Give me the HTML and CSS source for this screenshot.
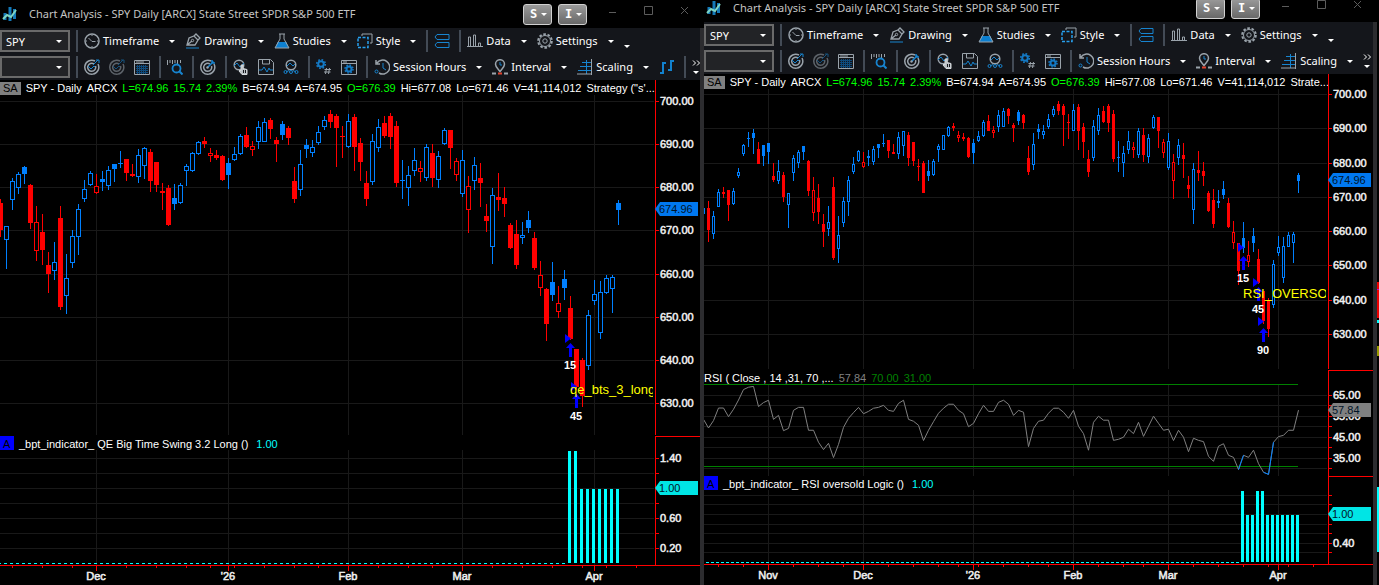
FILE: index.html
```html
<!DOCTYPE html>
<html lang="en">
<head>
  <meta charset="UTF-8">
  <meta name="viewport" content="width=device-width, initial-scale=1.0">
  <title>Chart Analysis</title>
  <link rel="stylesheet" href="styles.css">
</head>
<body>

  <!-- icon set -->
  <svg class="icon-defs" aria-hidden="true">
    <symbol id="i-logo" viewBox="0 0 16 16"><path d="M3 7v7M8 1v14M12.500 3v10" stroke="#1479b8" stroke-width="3" fill="none"/><path d="M1 13l4-4 4 2 5-7" stroke="#7fd6c4" stroke-width="2" fill="none"/></symbol>
    <symbol id="i-clock" viewBox="0 0 16 16"><circle cx="8" cy="8" r="7" class="g" stroke-width="1.500"/><path d="M4.500 5L8 8.500h3.500M8 2v1M8 13v1M2 8h1M13 8h1" class="g"/></symbol>
    <symbol id="i-pen" viewBox="0 0 16 16"><path d="M2 12l2-7 5-2 4 4-3 5zM2 12l5-4M9 3l2-2 4 4-2 2" class="g" stroke-width="1.300"/><circle cx="7.500" cy="7.500" r="1.200" class="g"/><path d="M1 15h13" class="b"/></symbol>
    <symbol id="i-flask" viewBox="0 0 16 16"><path d="M3.500 9h9l2.500 6H1z" fill="#0c7fd0"/><path d="M5 1h6M6 1v5L1 15h14L10 6V1" class="g"/></symbol>
    <symbol id="i-style" viewBox="0 0 16 16"><path d="M5 3V1h10v9h-2" class="g"/><path d="M1 4.500h10v10H1z" fill="none" stroke="#27a0ee" stroke-dasharray="3 1.500" stroke-width="1.500"/></symbol>
    <symbol id="i-stack" viewBox="0 0 16 16"><path d="M3 1.500h12v5H3L1 4zM3 9.500h12v5H3L1 12z" class="b"/></symbol>
    <symbol id="i-data" viewBox="0 0 16 16"><path d="M0 13.500h16M1.500 13V4h2v9M6.500 13V2h2v11M11.500 13v-3h2v3" class="g"/></symbol>
    <symbol id="i-gear" viewBox="0 0 16 16"><circle cx="8" cy="8" r="6.800" class="g" stroke-width="2" stroke-dasharray="2.600 1.700"/><circle cx="8" cy="8" r="5.500" class="g"/><circle cx="8" cy="8" r="2.200" class="g"/></symbol>
    <symbol id="i-scan" viewBox="0 0 16 16"><path d="M11 2a7 7 0 1 0 3 3M10 5a4 4 0 1 0 1.500 2" class="g" stroke-width="1.500"/><path d="M4 7l3 3 3-3 1 1M9 6l5-5M12 1h3v3" class="b"/></symbol>
    <symbol id="i-table" viewBox="0 0 16 16"><path d="M.5 1.500h15v14H.5zM1 4.500h14" class="g"/><path d="M2 3h8" class="g"/><path d="M3.500 6v9M5.500 6v9M7.500 6v9M9.500 6v9M11.500 6v9M2 7.500h12M2 9.500h12M2 11.500h12M2 13.500h12" stroke="#0e4b7d" fill="none"/></symbol>
    <symbol id="i-find" viewBox="0 0 16 16"><path d="M.5 1v5M3 1v3M5.500 1v4M8 1v3M10.500 1v4M13.500 1v3" class="g"/><circle cx="9.500" cy="9.500" r="4" class="b" stroke-width="1.800"/><path d="M12 12l3.500 3.500" class="b" stroke-width="2"/></symbol>
    <symbol id="i-target" viewBox="0 0 16 16"><path d="M11 2a7 7 0 1 0 3 3M10 5a4 4 0 1 0 1.500 2" class="g" stroke-width="1.500"/><path d="M7.500 8.500l6-6M12 1v3h3" class="b" stroke-width="1.500"/><circle cx="7.500" cy="8.500" r="1.200" fill="#9aa3ab"/></symbol>
    <symbol id="i-touch" viewBox="0 0 16 16"><circle cx="6" cy="6" r="4.800" class="g" stroke-width="1.500"/><path d="M1 7l3-3 3 4 4-4" class="b"/><path d="M8 6v6l-1-1-1 1 3 3.500h5v-5l-4-1V6z" fill="#b9bfc4" stroke="#d5d9dc"/><path d="M10.500 11v3M12.500 11v3" stroke="#14161b"/></symbol>
    <symbol id="i-save" viewBox="0 0 16 16"><path d="M.5 .5h12l3 3v12H.5zM4.500 1v4h7V1" class="g"/><path d="M1 11h3l2-3 3 5 2-4 1 2h3" class="b"/></symbol>
    <symbol id="i-nodes" viewBox="0 0 16 16"><circle cx="8" cy="6" r="4.800" class="g" stroke-width="1.500"/><path d="M4 7l3-3 3 3 2-2M3 13l3-1.500M10 11.500l3 1.500" class="b"/><circle cx="2.500" cy="13" r="1.500" class="b"/><circle cx="13.500" cy="13" r="1.500" class="b"/><circle cx="8" cy="13" r="1.500" class="b"/></symbol>
    <symbol id="i-gearnum" viewBox="0 0 16 16"><circle cx="5" cy="5" r="2.800" fill="none" stroke="#1479c4" stroke-width="2"/><circle cx="5" cy="5" r="4.300" fill="none" stroke="#1479c4" stroke-width="1.600" stroke-dasharray="1.700 1.670"/><path d="M10.500 9l-1 6M13.500 9l-1 6M8.500 10.500h6.500M8 13h6.500" class="g"/></symbol>
    <symbol id="i-wingear" viewBox="0 0 16 16"><path d="M.5 1.500h15v14H.5zM1 4.500h14M2 3h4" class="g"/><circle cx="8" cy="10" r="2.500" fill="none" stroke="#1479c4" stroke-width="2"/><circle cx="8" cy="10" r="4" fill="none" stroke="#1479c4" stroke-width="1.500" stroke-dasharray="1.600 1.540"/></symbol>
    <symbol id="i-history" viewBox="0 0 16 16"><path d="M3 4a7 7 0 1 1 2 10M2 1v4h4" class="g" stroke-width="1.500"/><path d="M9 4v5l3 2" class="b"/><circle cx="2.500" cy="12.500" r="1.500" class="b"/></symbol>
    <symbol id="i-pin" viewBox="0 0 16 16"><path d="M8 12.500C6 9.500 3.500 8 3.500 5.200a4.500 4.500 0 0 1 9 0C12.500 8 10 9.500 8 12.500z" class="g" stroke-width="1.500"/><path d="M8 3v3h2" class="b"/><path d="M0 14.500h4M12 14.500h4" class="g" stroke-width="2"/><path d="M6 14.500h4" stroke="#e0412c" stroke-width="2"/></symbol>
    <symbol id="i-scale" viewBox="0 0 16 16"><path d="M5 3.500h9M3 7.500h11M1 11.500h13M9.500 1v14" class="b"/><path d="M14.500 0v16M0 15h14" class="g"/></symbol>
    <symbol id="i-ohlc" viewBox="0 0 16 16"><path d="M1 14h2.500M4 3v12M4 4h3M9 11h3M12 1v11M12 2h3" fill="none" stroke="#1282cf" stroke-width="2"/></symbol>
  </svg>

  <!-- title bar and toolbars, same in every chart window -->
  <template id="chrome">
    <header class="titlebar">
      <svg class="icon"><use href="#i-logo"/></svg>
      <h1>Chart Analysis - SPY Daily [ARCX] State Street SPDR S&amp;P 500 ETF</h1>
      <button class="link-button" aria-label="Symbol link"><b>S</b><i class="arrow"></i></button>
      <button class="link-button" aria-label="Interval link"><b>I</b><i class="arrow"></i></button>
      <div class="window-buttons">
        <button aria-label="Minimize"><svg viewBox="0 0 9 9"><path d="M1 6.500h7"/></svg></button>
        <button aria-label="Maximize"><svg viewBox="0 0 9 9"><path d="M.5.5h8v8h-8z"/></svg></button>
        <button aria-label="Close"><svg viewBox="0 0 9 9"><path d="M1 1l7 7M8 1L1 8"/></svg></button>
      </div>
    </header>
    <nav class="toolbars">
      <div class="toolbar">
        <label class="combo"><select aria-label="Symbol"><option>SPY</option></select><i class="arrow"></i></label>
        <span class="sep"></span>
        <button class="menu"><svg class="icon"><use href="#i-clock"/></svg><span>Timeframe</span><i class="arrow"></i></button>
        <button class="menu"><svg class="icon"><use href="#i-pen"/></svg><span>Drawing</span><i class="arrow"></i></button>
        <button class="menu"><svg class="icon"><use href="#i-flask"/></svg><span>Studies</span><i class="arrow"></i></button>
        <button class="menu"><svg class="icon"><use href="#i-style"/></svg><span>Style</span><i class="arrow"></i></button>
        <span class="sep"></span>
        <button class="tool" aria-label="Panels"><svg class="icon"><use href="#i-stack"/></svg></button>
        <span class="sep"></span>
        <button class="menu"><svg class="icon"><use href="#i-data"/></svg><span>Data</span><i class="arrow"></i></button>
        <button class="menu"><svg class="icon"><use href="#i-gear"/></svg><span>Settings</span><i class="arrow"></i></button>
        <button class="more" aria-label="More"><i class="arrow"></i></button>
      </div>
      <div class="toolbar">
        <label class="combo"><select aria-label="Template"><option></option></select><i class="arrow"></i></label>
        <span class="sep"></span>
        <button class="tool" aria-label="Scan"><svg class="icon"><use href="#i-scan"/></svg></button>
        <button class="tool" aria-label="Rescan" disabled><svg class="icon"><use href="#i-scan"/></svg></button>
        <button class="tool" aria-label="Table"><svg class="icon"><use href="#i-table"/></svg></button>
        <span class="sep"></span>
        <button class="tool" aria-label="Find bar"><svg class="icon"><use href="#i-find"/></svg></button>
        <span class="sep"></span>
        <button class="tool" aria-label="Target"><svg class="icon"><use href="#i-target"/></svg></button>
        <span class="sep"></span>
        <button class="tool" aria-label="Select study"><svg class="icon"><use href="#i-touch"/></svg></button>
        <button class="tool" aria-label="Save study"><svg class="icon"><use href="#i-save"/></svg></button>
        <button class="tool" aria-label="Study nodes"><svg class="icon"><use href="#i-nodes"/></svg></button>
        <span class="sep"></span>
        <button class="tool" aria-label="Parameters"><svg class="icon"><use href="#i-gearnum"/></svg></button>
        <button class="tool" aria-label="Window settings"><svg class="icon"><use href="#i-wingear"/></svg></button>
        <span class="sep"></span>
        <button class="menu"><svg class="icon"><use href="#i-history"/></svg><span>Session Hours</span><i class="arrow"></i></button>
        <button class="menu"><svg class="icon"><use href="#i-pin"/></svg><span>Interval</span><i class="arrow"></i></button>
        <button class="menu"><svg class="icon"><use href="#i-scale"/></svg><span>Scaling</span><i class="arrow"></i></button>
        <button class="tool extra" aria-label="Bar type"><svg class="icon"><use href="#i-ohlc"/></svg></button>
        <span class="sep extra"></span>
        <button class="overflow" aria-label="More tools"><svg viewBox="0 0 9 6"><path d="M1 .5L3.500 3 1 5.500M5 .5L7.500 3 5 5.500"/></svg><i class="arrow"></i></button>
      </div>
    </nav>
  </template>

  <div class="desktop">
    <section class="window" id="swing">
      <div class="chrome"></div>
      <div class="legend quote">
        <p>
          <span class="badge">SA</span><span>SPY - Daily</span><span>ARCX</span>
          <span class="up">L=674.96</span><span class="up">15.74</span><span class="up">2.39%</span>
          <span>B=674.94</span><span>A=674.95</span><span class="up">O=676.39</span>
          <span>Hi=677.08</span><span>Lo=671.46</span><span>V=41,114,012</span><span>Strategy ("s'...</span>
        </p>
        <div class="axis-cap"></div>
      </div>
      <svg class="pane price"></svg>
      <div class="legend">
        <p><span class="badge study">A</span><span>_bpt_indicator_ QE Big Time Swing 3.2 Long ()</span><span class="cyan">1.00</span></p>
        <div class="axis-cap split"></div>
      </div>
      <svg class="pane signal"></svg>
    </section>

    <section class="window narrow" id="oversold">
      <div class="chrome"></div>
      <div class="legend quote">
        <p>
          <span class="badge">SA</span><span>SPY - Daily</span><span>ARCX</span>
          <span class="up">L=674.96</span><span class="up">15.74</span><span class="up">2.39%</span>
          <span>B=674.94</span><span>A=674.95</span><span class="up">O=676.39</span>
          <span>Hi=677.08</span><span>Lo=671.46</span><span>V=41,114,012</span><span>Strate...</span>
        </p>
        <div class="axis-cap"></div>
      </div>
      <svg class="pane price"></svg>
      <div class="legend">
        <p><span>RSI ( Close , 14 ,31, 70 ,...</span><span class="gray">57.84</span><span class="green">70.00</span><span class="green">31.00</span></p>
        <div class="axis-cap split"></div>
      </div>
      <svg class="pane rsi"></svg>
      <div class="legend">
        <p><span class="badge study">A</span><span>_bpt_indicator_ RSI oversold Logic ()</span><span class="cyan">1.00</span></p>
        <div class="axis-cap split"></div>
      </div>
      <svg class="pane signal"></svg>
    </section>

    <!-- next window, only its edge is on screen -->
    <div class="next-window"></div>
  </div>

  <script src="charts.js"></script>
</body>
</html>
```

FILE: styles.css
```css
* {
  box-sizing: border-box;
}

body {
  margin: 0;
  background: #000;
  color: #fff;
  font-family: "Liberation Sans", Arial, sans-serif;
  font-size: 11px;
  overflow: hidden;
}

button,
select {
  font: inherit;
  color: inherit;
  background: none;
  border: 0;
  padding: 0;
  margin: 0;
}

.icon-defs {
  display: none;
}

.icon {
  width: 16px;
  height: 16px;
  flex: none;
}

.g {
  fill: none;
  stroke: #9aa3ab;
}

.b {
  fill: none;
  stroke: #1784cf;
}

.arrow {
  width: 0;
  height: 0;
  flex: none;
  border: 3px solid transparent;
  border-top: 3px solid #fff;
  border-bottom: 0;
}

.desktop {
  display: flex;
  height: 100vh;
  overflow: hidden;
}

.window {
  flex: 704 1 0;
  min-width: 0;
  display: flex;
  flex-direction: column;
}

.window.narrow {
  flex-grow: 673;
  margin-top: -6px;
}

/* title bar */
.titlebar {
  display: flex;
  align-items: center;
  height: 28px;
  padding: 0 15px 0 2px;
  font-family: "Noto Sans", "Open Sans", sans-serif;
}

.titlebar h1 {
  flex: 1;
  min-width: 0;
  margin: 0 0 2px 11px;
  font-size: 11px;
  font-weight: normal;
  color: #c4c4c4;
  white-space: nowrap;
  overflow: hidden;
}

.link-button {
  display: flex;
  align-items: center;
  justify-content: space-between;
  width: 29px;
  height: 21px;
  margin-right: 6px;
  padding: 0 4px 0 6px;
  border: 1px solid #d0d0d0;
  border-radius: 3px;
  background: linear-gradient(#9a9a9a, #686868);
  font-family: "DejaVu Sans Mono", monospace;
  font-size: 12px;
}

.window-buttons {
  display: flex;
  gap: 27px;
  margin: 0 0 8px 15px;
}

.window-buttons svg {
  display: block;
  width: 9px;
  height: 9px;
  fill: none;
  stroke: #5c5c5c;
}

/* toolbars */
.toolbars {
  margin-right: 4px;
  background: #14161b;
  box-shadow: 4px 0 0 #2c2c2f;
  font-family: "Noto Sans", "Open Sans", sans-serif;
}

.toolbar {
  display: flex;
  align-items: center;
  height: 26px;
  overflow: hidden;
}

.combo {
  position: relative;
  flex: none;
  width: 70px;
  height: 22px;
  border: 2px solid #6a6a6a;
  background: #222326;
}

.combo select {
  appearance: none;
  width: 100%;
  height: 100%;
  padding-left: 4px;
}

.combo .arrow {
  position: absolute;
  right: 6px;
  top: 8px;
  pointer-events: none;
}

.sep {
  flex: none;
  width: 2px;
  height: 22px;
  margin: 0 6px;
  background: #434b56;
}

.tool {
  display: flex;
  flex: none;
  margin-right: 9px;
}

.tool + .sep {
  margin-left: 0;
}

.tool:disabled {
  opacity: .55;
}

.menu {
  display: flex;
  flex: none;
  align-items: center;
  margin-right: 10px;
}

.menu span {
  margin: 0 10px 2px 3px;
}

.menu + .sep {
  margin-left: 0;
}

.more {
  display: flex;
  margin-top: 10px;
}

.overflow {
  display: flex;
  flex: none;
  flex-direction: column;
  align-items: center;
  gap: 5px;
}

.overflow svg {
  width: 9px;
  height: 6px;
  fill: none;
  stroke: #fff;
}

.narrow .extra {
  display: none;
}

/* legends over each pane */
.legend,
.pane {
  border-right: 4px solid #2c2c2f;
}

.legend {
  display: flex;
  flex: none;
  height: 14px;
}

.legend.quote {
  height: 15px;
}

.legend p {
  display: flex;
  flex: 1;
  min-width: 0;
  gap: 5px;
  margin: 0;
  line-height: 16px;
  white-space: nowrap;
  overflow: hidden;
}

.legend.quote p {
  padding-top: 2px;
  line-height: 13px;
}

.axis-cap {
  flex: none;
  width: 45px;
  border-left: 1px solid #f00;
}

.axis-cap.split {
  border-top: 1px solid #f00;
}

.badge {
  padding: 0 3px;
  background: #808080;
  color: #000;
}

.badge.study {
  width: 14px;
  background: #00f;
}

.up { color: #0f0; }
.cyan { color: #0ff; margin-left: 3px; }
.gray { color: #808080; }
.green { color: #008000; }

/* chart panes */
.pane {
  display: block;
  flex: none;
  width: 100%;
}

#swing .price { height: 341px; }
#swing .signal { height: 135px; }
#oversold .price { height: 281px; }
#oversold .rsi { height: 92px; }
#oversold .signal { height: 95px; }

.pane text {
  fill: #fff;
  font-size: 11px;
}

.pane .scale {
  fill: #f0f0f0;
  stroke: #f0f0f0;
  stroke-width: .5;
}

.pane .mark { font-weight: bold; }
.pane .name { fill: #ff0; font-size: 13px; }
.pane .tag { fill: #001428; }

.next-window {
  flex: 2 1 0;
  background: linear-gradient(#000 282px, #e00 282px, #e00 289px, #c0c 289px, #c0c 290px, #e00 290px, #e00 318px, #000 318px, #000 320px, #0ff 320px, #0ff 323px, #000 323px, #000 346px, #990 346px, #990 356px, #000 356px, #000 487px, #0ff 487px, #0ff 552px, #000 552px);
}
```

FILE: charts.js
```javascript
// both windows share the chrome
document.querySelectorAll('.chrome').forEach(el => {
  el.appendChild(document.getElementById('chrome').content.cloneNode(true));
});

// [high, body top, body bottom, low, type], distances under the 700 line
// u/U = up hollow/filled, d/D = down hollow/filled
const bars = [
  [144,144,152,152,'U'],[135,144,172,187,'D'],[148,154,177,183,'u'],[120,124,143,143,'u'],
  [118,124,127,132,'D'],[122,122,141,161,'D'],[119,123,139,141,'u'],[94,99,104,107,'u'],
  [64,65,76,79,'u'],[49,56,58,68,'U'],[45,50,56,76,'U'],[61,70,89,89,'D'],
  [65,65,79,91,'U'],[63,63,74,89,'U'],[88,104,109,112,'D'],[84,98,110,114,'u'],
  [99,103,130,137,'D'],[126,126,140,169,'u'],[78,81,100,110,'u'],[72,74,88,94,'u'],
  [66,67,74,84,'U'],[84,85,123,129,'D'],[106,122,151,161,'d'],[114,132,150,165,'D'],
  [152,165,174,193,'D'],[142,162,171,180,'u'],[106,118,207,210,'D'],[154,178,196,214,'u'],
  [130,136,163,168,'u'],[104,109,137,155,'u'],[80,89,99,102,'u'],[71,73,85,86,'u'],
  [74,86,93,94,'d'],[71,79,82,91,'U'],[66,70,86,90,'u'],[64,64,69,82,'U'],
  [51,63,64,68,'U'],[59,59,73,81,'D'],[64,74,76,77,'D'],[49,55,77,83,'u'],
  [47,48,66,79,'u'],[49,52,81,92,'D'],[62,62,85,92,'D'],[83,91,93,110,'D'],
  [85,88,125,126,'D'],[84,98,104,110,'U'],[83,85,103,104,'u'],[64,66,71,86,'u'],
  [52,53,71,72,'u'],[41,42,54,55,'u'],[37,41,44,48,'D'],[48,53,56,62,'d'],
  [50,55,58,60,'D'],[55,56,80,81,'D'],[58,63,75,89,'U'],[47,54,60,61,'u'],
  [34,36,54,55,'u'],[27,35,47,48,'D'],[41,46,50,56,'d'],[21,27,42,49,'u'],
  [18,22,42,42,'u'],[18,20,29,39,'D'],[37,40,44,62,'D'],[21,24,35,40,'U'],
  [26,28,38,45,'D'],[67,81,99,103,'D'],[50,64,90,96,'u'],[39,45,49,58,'U'],
  [40,47,53,57,'u'],[26,32,43,45,'u'],[16,20,27,30,'u'],[10,14,22,28,'D'],
  [14,16,28,67,'D'],[26,36,37,58,'D'],[14,21,47,48,'u'],[14,17,47,71,'D'],
  [38,43,62,81,'D'],[71,83,99,106,'D'],[34,41,82,85,'u'],[19,27,48,52,'u'],
  [16,23,36,38,'D'],[13,16,37,49,'D'],[21,26,83,87,'D'],[60,80,81,99,'U'],
  [66,75,88,106,'u'],[48,60,71,76,'u'],[61,68,72,82,'d'],[44,47,78,81,'u'],
  [44,53,78,87,'D'],[51,56,80,88,'u'],[28,30,44,45,'u'],[30,30,48,69,'D'],
  [58,61,75,81,'d'],[50,60,94,97,'u'],[76,86,110,133,'d'],[57,65,81,90,'u'],
  [63,78,83,107,'D'],[104,116,121,132,'D'],[88,95,147,164,'u'],[73,97,100,111,'D'],
  [87,98,104,117,'D'],[123,125,148,149,'D'],[120,134,165,169,'D'],[122,135,138,144,'u'],
  [111,120,128,133,'U'],[132,138,168,170,'D'],[161,175,188,196,'d'],[188,189,224,241,'D'],
  [162,182,195,201,'U'],[186,203,212,218,'d'],[170,179,188,200,'U'],[196,208,239,240,'D'],
  [249,249,287,290,'D'],[258,260,296,307,'D'],[210,215,266,270,'u'],[180,194,201,205,'u'],
  [181,192,233,239,'u'],[175,178,193,194,'u'],[175,177,189,213,'u'],[100,103,110,125,'U']
];

const rsi = [
  53.4,49.3,52.8,58.8,58.8,54.7,58.2,62.6,67.6,68.7,69.1,59.5,61.4,62.5,53.4,55.3,
  48,49.1,57.7,59.1,59.1,48.2,48.2,42.5,39,42,35.2,41.5,49.6,53.9,56.6,59.1,56.1,
  57.2,58.7,59.1,60.1,57.7,57.2,61,62.5,53.4,52.5,50.6,43.3,48.2,52.3,56.3,58.7,
  60.6,60.6,57.7,56.1,49.9,51.5,56.1,60.1,57.2,57.2,61.5,62.5,60.6,55.3,57.7,56.8,
  40.4,49.1,52.5,53,56.3,58.7,58.7,56.8,53.9,57.7,50.1,46.6,38.7,52,54.9,53,53,
  43.4,43.9,44.9,48.7,46.6,52,45.3,50.1,54.9,51.5,48.2,48.7,43.3,48.2,44.9,38,
  44.4,43.4,42.8,35.8,33.4,40.6,41.8,36.3,35.3,29.5,36.3,35.3,38.7,32.3,28.2,27.2,
  42.5,45.2,45.8,48.2,48.2,57.8
];

// bars back from the last one
const months = [[106, 'Nov'], [87, 'Dec'], [65, "'26"], [45, 'Feb'], [26, 'Mar'], [4, 'Apr']];
const weeks = [116, 111, 101, 96, 91, 82, 77, 72, 68, 64, 59, 54, 50, 40, 35, 31, 21, 16, 11, 6, 2, -3];

const AXIS = 45;
const GRID = '#191919';
const last = bars.length - 1;

function rect(x, y, w, h, fill) {
  return `<rect x="${x}" y="${y}" width="${w}" height="${h}" fill="${fill}"/>`;
}

function label(x, y, text, cls, anchor) {
  return `<text x="${x}" y="${y}" class="${cls}" text-anchor="${anchor || 'start'}">${text}</text>`;
}

function tag(x, y, text, fill) {
  return `<path d="M${x} ${y}l5 -7h38v14h-38z" fill="${fill}"/>` + label(x + 4, y + 4, text, 'tag');
}

// svg width without the window border, on whole pixels
function paneWidth(svg) {
  return Math.round(svg.getBoundingClientRect().width) - 4;
}

function frame(c, w, h, rows) {
  const ax = w - AXIS;
  let s = '';
  months.forEach(m => { s += rect(ax - c.right - m[0] * c.step, 0, 1, h, GRID); });
  rows.forEach(r => {
    s += rect(0, r[0], ax - 1, 1, GRID) + rect(ax, r[0], 4, 1, '#f00');
    if (r[1]) s += label(ax + 5, r[0] + 4, r[1], 'scale');
  });
  return s + rect(ax, 0, 1, h, '#f00');
}

function drawPrice(svg, c) {
  const w = paneWidth(svg), ax = w - AXIS;
  const y = v => Math.round(c.zero + (v - 1) * c.zoom);
  const rows = [];
  for (let p = 0; p < 8; p++) {
    rows.push([Math.round(c.zero + p * 43.14 * c.zoom), (700 - p * 10) + '.00']);
  }
  let s = frame(c, w, c.h, rows);
  bars.forEach((b, i) => {
    const x = ax - c.right - (last - i) * c.step;
    const color = b[4].toLowerCase() === 'u' ? '#0080ff' : '#f00';
    const top = y(b[1]), bh = Math.max(1, y(b[2]) - top), half = (c.body - 1) / 2;
    s += rect(x, y(b[0]), 1, Math.max(1, y(b[3]) - y(b[0])), color);
    s += rect(x - half, top, c.body, bh, color);
    if ((b[4] === 'u' || b[4] === 'd') && bh > 2) {
      s += rect(x - half + 1, top + 1, c.body - 2, bh - 2, '#000');
    }
  });
  // strategy entries: price triangle, arrow, size
  c.entries.forEach(e => {
    const x = ax - c.right - e[0] * c.step;
    s += `<path d="M${x - 5} ${e[1]}l6 4.500l-6 4.500z" fill="#00f"/>`;
    s += `<path d="M${x + .5} ${e[2]}l4.500 5h-3v9h-3v-9h-3z" fill="#00f"/>`;
    s += label(x, e[2] + 26, e[3], 'mark', 'middle');
  });
  const n = c.name;
  s += `<svg width="${ax - 2}" height="${c.h}">` + label(ax - c.right - n[0] * c.step, n[1], n[2], 'name') + '</svg>';
  svg.innerHTML = s + tag(ax, c.last, '674.96', '#0078f0');
}

function drawRsi(svg, c) {
  const w = paneWidth(svg), ax = w - AXIS;
  const y = v => 11 + (65 - v) * 2.1;
  const rows = [[11, '65.00'], [21], [32, '55.00'], [42], [53, '45.00'], [63], [74, '35.00'], [84]];
  let s = frame(c, w, 92, rows);
  s += rect(0, 0, ax - c.right, 1, '#008000') + rect(0, 82, ax - c.right, 1, '#008000');
  const pt = i => (ax - c.right + .5 - (last - i) * c.step) + ',' + y(rsi[i]);
  s += `<polyline points="${rsi.map((v, i) => pt(i)).join(' ')}" fill="none" stroke="#808080"/>`;
  [[107, 108], [112, 113, 114]].forEach(run => {
    s += `<polyline points="${run.map(pt).join(' ')}" fill="none" stroke="#0080ff"/>`;
  });
  svg.innerHTML = s + tag(ax, 26, '57.84', '#808080');
}

function drawSignal(svg, c) {
  const w = paneWidth(svg), ax = w - AXIS, base = c.base;
  let s = frame(c, w, base + 2, c.rows);
  bars.forEach((b, i) => {
    const back = last - i;
    const x = ax - c.right - back * c.step - 2;
    if (back > c.since) s += rect(x, base, 3, 1, '#0ff');
    else {
      const top = c.high.includes(back) ? 1 : c.one;
      s += rect(x, top, 3, base - top, '#0ff');
    }
  });
  s += rect(0, base + 2, w, 1, '#f00');
  weeks.forEach(k => { s += rect(ax - c.right - k * c.step, base + 3, 1, 2, '#f00'); });
  months.forEach(m => {
    const x = ax - c.right - m[0] * c.step;
    if (x < 10) return;
    s += rect(x, base + 3, 1, 5, '#f00') + label(x, base + 17, m[1], 'scale', 'middle');
  });
  svg.innerHTML = s + tag(ax, c.one - 1, '1.00', '#00e5e5');
}

const swing = {
  step: 6, body: 5, right: 37, h: 340, zero: 6, zoom: 1, last: 114,
  entries: [[8, 239, 248, '15'], [7, 287, 299, '45']],
  name: [8, 299, 'qe_bts_3_long'],
  base: 113, one: 39, since: 8, high: [8, 7],
  rows: [[8, '1.40'], [23], [38], [53], [68, '0.60'], [83], [98, '0.20']]
};

const oversold = {
  step: 5, body: 3, right: 30, h: 280, zero: 5, zoom: .795, last: 91,
  entries: [[11, 154, 167, '15'], [8, 189, 198, '45'], [7, 228, 239, '90']],
  name: [11, 209, 'RSI_OVERSO'],
  base: 72, one: 25, since: 11, high: [11, 8, 7],
  rows: [[5], [14], [24], [34], [43], [53, '0.40'], [62]]
};

function draw() {
  drawPrice(document.querySelector('#swing .price'), swing);
  drawSignal(document.querySelector('#swing .signal'), swing);
  drawPrice(document.querySelector('#oversold .price'), oversold);
  drawRsi(document.querySelector('#oversold .rsi'), oversold);
  drawSignal(document.querySelector('#oversold .signal'), oversold);
}

draw();
window.addEventListener('resize', draw);
```
